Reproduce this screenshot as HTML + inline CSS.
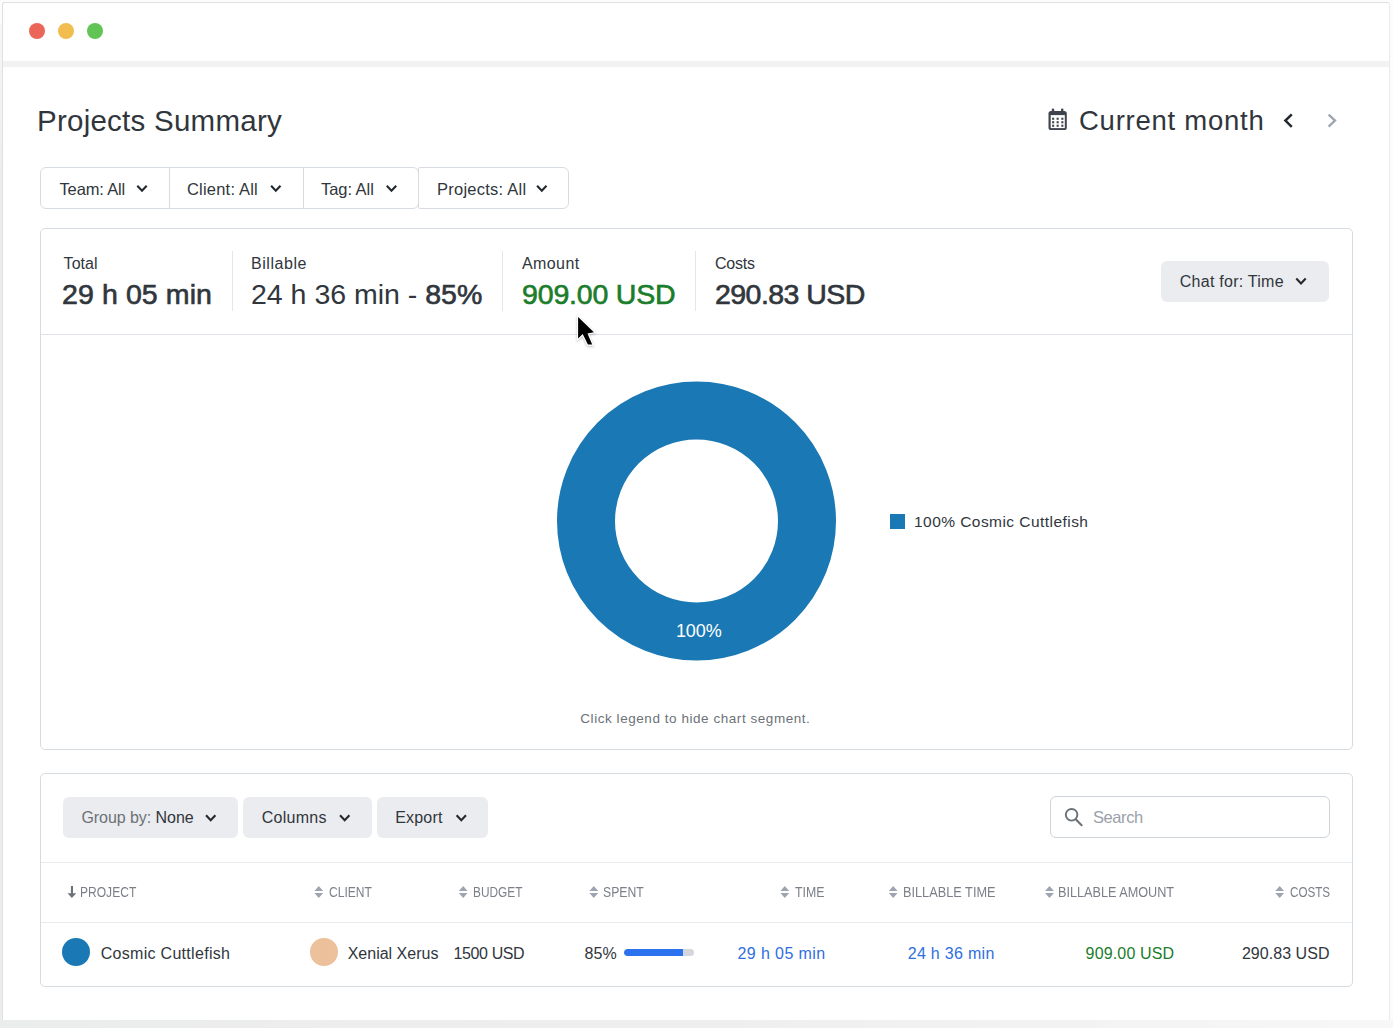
<!DOCTYPE html>
<html><head><meta charset="utf-8">
<style>
*{margin:0;padding:0;box-sizing:border-box}
html,body{width:1393px;height:1028px;overflow:hidden}
body{background:#fcfcfc;font-family:"Liberation Sans",sans-serif;color:#30363c;position:relative}
.a{position:absolute;white-space:nowrap}
#win{position:absolute;left:2px;top:2px;width:1388px;height:1018px;background:#fff;border:1px solid #e0e0e0;border-right-color:#ebebeb;border-bottom:none;border-radius:3px 3px 0 0}
.dot{position:absolute;top:23px;width:16px;height:16px;border-radius:50%}
#band{position:absolute;left:3px;top:61px;width:1386px;height:6px;background:#f2f2f2}
.card{position:absolute;left:40px;width:1313px;border:1px solid #d7dce2;border-radius:5px;background:#fff}
.btn{position:absolute;background:#ebecef;border-radius:6px}
.chev{position:absolute}
.th{font-size:13px;color:#7b8088}
.sb{font-weight:normal;-webkit-text-stroke:0.65px currentColor}
.sort{position:absolute;width:9px;height:12px}
</style></head><body>
<div class="a" style="left:0;top:24px;width:2px;height:1004px;background:linear-gradient(#f6f6f6,#eceeed 15%,#eceeed)"></div>
<div class="a" style="left:0;top:1020px;width:1393px;height:8px;background:linear-gradient(to right,#ebedec,#eeeeee 50%,#f7f7f7)"></div>
<div id="win"></div>
<div class="dot" style="left:29px;background:#ec6559"></div>
<div class="dot" style="left:58px;background:#f2bd4f"></div>
<div class="dot" style="left:87px;background:#61c454"></div>
<div id="band"></div>

<!-- header -->
<div class="a" id="t_title" style="left: 37px; top: 104px; font-size: 29.5px; color: rgb(48, 54, 60); letter-spacing: 0.25px;">Projects Summary</div>
<svg class="a" style="left:1048px;top:108px" width="20" height="23" viewBox="0 0 20 23">
  <rect x="0.5" y="3" width="18.3" height="19" rx="2.6" fill="#3f454c"/>
  <rect x="3.8" y="0.4" width="2.4" height="5.5" rx="1.1" fill="#3f454c"/>
  <rect x="13" y="0.4" width="2.4" height="5.5" rx="1.1" fill="#3f454c"/>
  <rect x="2.7" y="7.1" width="14.1" height="13" fill="#fff"/>
  <g fill="#3f454c">
    <rect x="4.1" y="9.7" width="2.1" height="2.1"/><rect x="8.6" y="9.7" width="2.1" height="2.1"/><rect x="13.3" y="9.7" width="2.1" height="2.1"/>
    <rect x="4.1" y="13.2" width="2.1" height="2.1"/><rect x="8.6" y="13.2" width="2.1" height="2.1"/><rect x="13.3" y="13.2" width="2.1" height="2.1"/>
    <rect x="4.1" y="16.7" width="2.1" height="2.1"/><rect x="8.6" y="16.7" width="2.1" height="2.1"/><rect x="13.3" y="16.7" width="2.1" height="2.1"/>
  </g>
</svg>
<div class="a" id="t_cm" style="left: 1079px; top: 105px; font-size: 27.5px; color: rgb(48, 54, 60); letter-spacing: 0.75px;">Current month</div>
<svg class="a" style="left:0;top:0" width="1393" height="1028">
  <path d="M1291.8 114.3 L1285.4 120.6 L1291.8 126.9" fill="none" stroke="#23292e" stroke-width="2.5"/>
  <path d="M1328.6 114.6 L1335 120.6 L1328.6 126.6" fill="none" stroke="#9ea6b3" stroke-width="2.3"/>
</svg>

<!-- filters -->
<div class="a" style="left:40px;top:167px;width:379px;height:42px;border:1px solid #d7dce2;border-radius:6px"></div>
<div class="a" style="left:169px;top:167px;width:1px;height:42px;background:#d7dce2"></div>
<div class="a" style="left:303px;top:167px;width:1px;height:42px;background:#d7dce2"></div>
<div class="a" style="left:418px;top:167px;width:151px;height:42px;border:1px solid #d7dce2;border-radius:2px 6px 6px 2px"></div>
<div class="a" id="t_team" style="left: 59.5px; top: 180px; font-size: 16.5px; letter-spacing: -0.15px;">Team: All</div>
<div class="a" id="t_client" style="left: 187px; top: 180px; font-size: 16.5px; letter-spacing: 0.2px;">Client: All</div>
<div class="a" id="t_tag" style="left: 321px; top: 180px; font-size: 16.5px; letter-spacing: -0.05px;">Tag: All</div>
<div class="a" id="t_proj" style="left: 437px; top: 180px; font-size: 16.5px; letter-spacing: 0.25px;">Projects: All</div>

<!-- stats card -->
<div class="card" style="top:228px;height:522px"></div>
<div class="a" style="left:41px;top:334px;width:1311px;height:1px;background:#dfe3e8"></div>
<div class="a" style="left:232px;top:251px;width:1px;height:60px;background:#e3e6ea"></div>
<div class="a" style="left:502px;top:251px;width:1px;height:60px;background:#e3e6ea"></div>
<div class="a" style="left:695px;top:251px;width:1px;height:60px;background:#e3e6ea"></div>

<div class="a" id="t_total" style="left: 63.6px; top: 255px; font-size: 16px; letter-spacing: 0.05px;">Total</div>
<div class="a sb" id="t_totv" style="left: 62px; top: 278px; font-size: 28.5px; letter-spacing: 0.1px;">29 h 05 min</div>
<div class="a" id="t_bill" style="left: 251px; top: 255px; font-size: 16px; letter-spacing: 0.55px;">Billable</div>
<div class="a" id="t_billv" style="left: 251px; top: 278px; font-size: 28.5px; letter-spacing: 0px;">24 h 36 min - <span class="sb">85%</span></div>
<div class="a" id="t_amt" style="left: 522px; top: 255px; font-size: 16px; letter-spacing: 0.4px;">Amount</div>
<div class="a sb" id="t_amtv" style="left: 522.1px; top: 278px; font-size: 28.5px; color: rgb(27, 125, 43); letter-spacing: -0.2px;">909.00 USD</div>
<div class="a" id="t_costs" style="left: 715px; top: 255px; font-size: 16px; letter-spacing: -0.2px;">Costs</div>
<div class="a sb" id="t_costv" style="left: 715px; top: 278px; font-size: 28.5px; letter-spacing: -0.55px;">290.83 USD</div>

<div class="btn" style="left:1161px;top:261px;width:168px;height:41px"></div>
<div class="a" id="t_chat" style="left: 1179.8px; top: 273px; font-size: 16px; letter-spacing: 0.25px;">Chat for: Time</div>

<!-- donut -->
<svg class="a" style="left:0;top:0" width="1393" height="1028">
  <circle cx="696.5" cy="521" r="110.5" fill="none" stroke="#1a78b4" stroke-width="58"/>
</svg>
<div class="a" id="t_100" style="left: 675.9px; top: 621px; font-size: 18px; color: rgb(255, 255, 255); letter-spacing: -0.05px;">100%</div>
<div class="a" style="left:890px;top:514px;width:15px;height:15px;background:#1a78b4"></div>
<div class="a" id="t_leg" style="left: 914px; top: 513px; font-size: 15.5px; letter-spacing: 0.45px;">100% Cosmic Cuttlefish</div>
<div class="a" id="t_click" style="left: 580.3px; top: 711px; font-size: 13.5px; color: rgb(109, 114, 119); letter-spacing: 0.55px;">Click legend to hide chart segment.</div>

<!-- table card -->
<div class="card" style="top:773px;height:214px"></div>
<div class="btn" style="left:63px;top:797px;width:175px;height:41px"></div>
<div class="btn" style="left:243px;top:797px;width:129px;height:41px"></div>
<div class="btn" style="left:377px;top:797px;width:111px;height:41px"></div>
<div class="a" id="t_group" style="left: 81.4px; top: 809px; font-size: 16px; letter-spacing: -0.05px;"><span style="color:#6b7176">Group by:</span> None</div>
<div class="a" id="t_cols" style="left: 261.8px; top: 809px; font-size: 16px; letter-spacing: 0.25px;">Columns</div>
<div class="a" id="t_exp" style="left: 395.2px; top: 809px; font-size: 16px; letter-spacing: 0.2px;">Export</div>

<div class="a" style="left:1050px;top:796px;width:280px;height:42px;border:1px solid #cfd4da;border-radius:6px"></div>
<svg class="a" style="left:0;top:0" width="1393" height="1028"><circle cx="1071.6" cy="814.8" r="5.8" fill="none" stroke="#6b7178" stroke-width="1.9"/><path d="M1076 819.6 L1081.6 825.2" stroke="#6b7178" stroke-width="2.1" stroke-linecap="round"/></svg>
<div class="a" id="t_search" style="left: 1092.9px; top: 808px; font-size: 16.5px; color: rgb(154, 161, 169); letter-spacing: -0.4px;">Search</div>

<div class="a" style="left:41px;top:862px;width:1311px;height:1px;background:#e8ebee"></div>
<div class="a" style="left:41px;top:922px;width:1311px;height:1px;background:#e8ebee"></div>

<div class="a th" id="h_proj" style="left: 80.4px; top: 884px; font-size: 14px; letter-spacing: 0px; transform: scaleX(0.861); transform-origin: 0px 0px;">PROJECT</div>
<div class="a th" id="h_client" style="left: 328.8px; top: 884px; font-size: 14px; letter-spacing: 0px; transform: scaleX(0.86); transform-origin: 0px 0px;">CLIENT</div>
<div class="a th" id="h_budget" style="left: 473px; top: 884px; font-size: 14px; letter-spacing: 0px; transform: scaleX(0.847); transform-origin: 0px 0px;">BUDGET</div>
<div class="a th" id="h_spent" style="left: 602.8px; top: 884px; font-size: 14px; letter-spacing: 0px; transform: scaleX(0.871); transform-origin: 0px 0px;">SPENT</div>
<div class="a th" id="h_time" style="left: 794.8px; top: 884px; font-size: 14px; letter-spacing: 0px; transform: scaleX(0.879); transform-origin: 0px 0px;">TIME</div>
<div class="a th" id="h_bt" style="left: 903px; top: 884px; font-size: 14px; letter-spacing: 0px; transform: scaleX(0.91); transform-origin: 0px 0px;">BILLABLE TIME</div>
<div class="a th" id="h_ba" style="left: 1057.9px; top: 884px; font-size: 14px; letter-spacing: 0px; transform: scaleX(0.904); transform-origin: 0px 0px;">BILLABLE AMOUNT</div>
<div class="a th" id="h_costs" style="left: 1289.5px; top: 884px; font-size: 14px; letter-spacing: 0px; transform: scaleX(0.832); transform-origin: 0px 0px;">COSTS</div>

<div class="a" style="left:62px;top:938px;width:28px;height:28px;border-radius:50%;background:#1a78b4"></div>
<div class="a" id="r_proj" style="left: 100.7px; top: 945px; font-size: 16px; letter-spacing: 0.3px;">Cosmic Cuttlefish</div>
<div class="a" style="left:310px;top:938px;width:28px;height:28px;border-radius:50%;background:#ecc09a"></div>
<div class="a" id="r_client" style="left: 347.7px; top: 945px; font-size: 16px; letter-spacing: 0px;">Xenial Xerus</div>
<div class="a" id="r_budget" style="left: 453.6px; top: 945px; font-size: 16px; letter-spacing: -0.4px;">1500 USD</div>
<div class="a" id="r_spent" style="left: 584.4px; top: 945px; font-size: 16px; letter-spacing: 0.2px;">85%</div>
<div class="a" style="left:624px;top:949px;width:70px;height:7px;border-radius:4px;background:#d3d7dc;overflow:hidden"><div style="width:59px;height:7px;background:#2c72ee;border-radius:4px 0 0 4px"></div></div>
<div class="a" id="r_time" style="left: 737.5px; top: 945px; font-size: 16px; color: rgb(47, 111, 224); letter-spacing: 0.4px;">29 h 05 min</div>
<div class="a" id="r_bt" style="left: 907.7px; top: 945px; font-size: 16px; color: rgb(47, 111, 224); letter-spacing: 0.3px;">24 h 36 min</div>
<div class="a" id="r_ba" style="left: 1085.6px; top: 945px; font-size: 16px; color: rgb(27, 125, 43); letter-spacing: 0.15px;">909.00 USD</div>
<div class="a" id="r_costs" style="left: 1241.9px; top: 945px; font-size: 16px; letter-spacing: 0.05px;">290.83 USD</div>

<svg class="a" style="left:0;top:0" width="1393" height="1028">
<path d="M137.3 185.8 L142.0 190.8 L146.7 185.8" fill="none" stroke="#23292e" stroke-width="2.1"/>
<path d="M271.1 185.8 L275.8 190.8 L280.5 185.8" fill="none" stroke="#23292e" stroke-width="2.1"/>
<path d="M386.8 185.8 L391.5 190.8 L396.2 185.8" fill="none" stroke="#23292e" stroke-width="2.1"/>
<path d="M537.1 185.8 L541.8 190.8 L546.5 185.8" fill="none" stroke="#23292e" stroke-width="2.1"/>
<path d="M1296.3 278.5 L1301.0 283.5 L1305.7 278.5" fill="none" stroke="#23292e" stroke-width="2.1"/>
<path d="M206.0 815.3 L210.7 820.3 L215.4 815.3" fill="none" stroke="#23292e" stroke-width="2.1"/>
<path d="M340.0 815.3 L344.7 820.3 L349.4 815.3" fill="none" stroke="#23292e" stroke-width="2.1"/>
<path d="M456.6 815.3 L461.3 820.3 L466.0 815.3" fill="none" stroke="#23292e" stroke-width="2.1"/>
<path d="M314.4 890.9 L318.8 886 L323.2 890.9 Z M314.4 893.1 L318.8 898 L323.2 893.1 Z" fill="#9ea4b0"/>
<path d="M458.8 890.9 L463.2 886 L467.6 890.9 Z M458.8 893.1 L463.2 898 L467.6 893.1 Z" fill="#9ea4b0"/>
<path d="M589.4 890.9 L593.8 886 L598.2 890.9 Z M589.4 893.1 L593.8 898 L598.2 893.1 Z" fill="#9ea4b0"/>
<path d="M780.4 890.9 L784.8 886 L789.2 890.9 Z M780.4 893.1 L784.8 898 L789.2 893.1 Z" fill="#9ea4b0"/>
<path d="M888.8 890.9 L893.2 886 L897.6 890.9 Z M888.8 893.1 L893.2 898 L897.6 893.1 Z" fill="#9ea4b0"/>
<path d="M1045.1 890.9 L1049.5 886 L1053.9 890.9 Z M1045.1 893.1 L1049.5 898 L1053.9 893.1 Z" fill="#9ea4b0"/>
<path d="M1275.3 890.9 L1279.7 886 L1284.1 890.9 Z M1275.3 893.1 L1279.7 898 L1284.1 893.1 Z" fill="#9ea4b0"/>
<path d="M70.9 886.1 H73 V893.3 H76.3 L71.9 898 L67.5 893.3 H70.9 Z" fill="#6e737b"/>
</svg>
<svg class="a" style="left:0;top:0" width="1393" height="1028">
<path d="M578.1 317 L578.1 338.6 L582.7 333.9 L587.9 344.5 L592.2 344.5 L587.5 333.4 L593.9 332.2 Z" fill="#000" stroke="#fff" stroke-width="2.4" stroke-linejoin="miter" paint-order="stroke" style="filter:drop-shadow(0 1px 1px rgba(0,0,0,0.25))"/>
</svg>
</body></html>
